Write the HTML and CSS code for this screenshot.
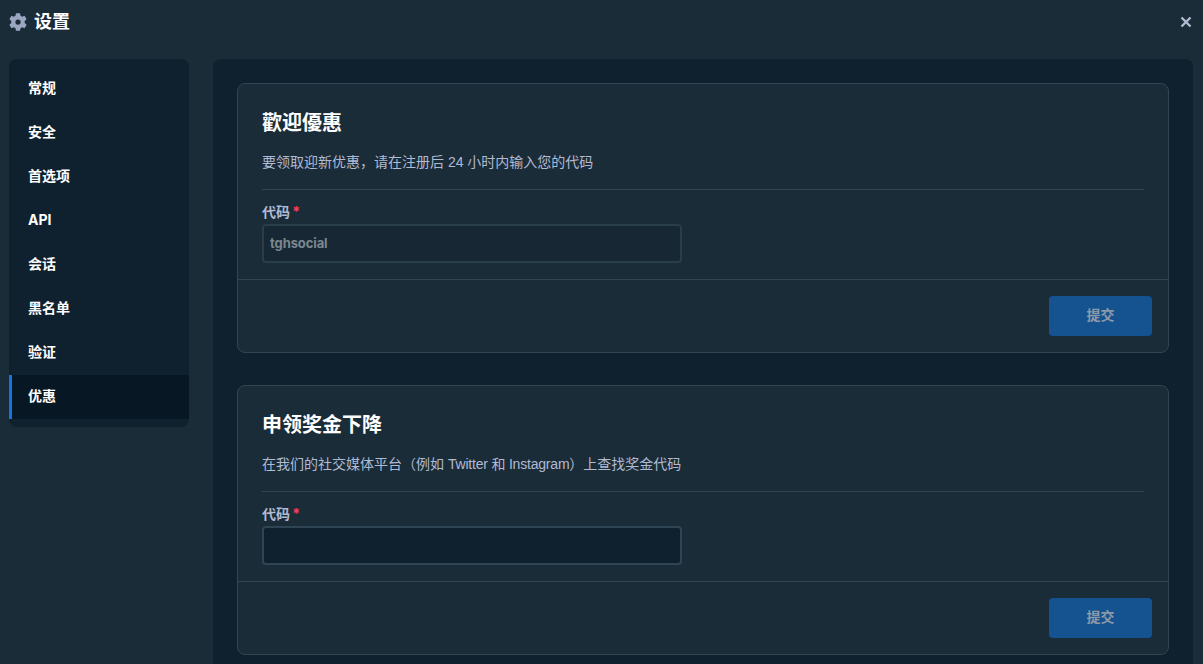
FILE: index.html
```html
<!DOCTYPE html>
<html lang="zh">
<head>
<meta charset="utf-8">
<title>设置</title>
<link rel="stylesheet" href="styles.css">
</head>
<body>
<div class="modal">
  <header class="head">
    <div class="head-title">
      <svg class="gear" viewBox="0 0 24 24"><path fill-rule="evenodd" d="M9.3.3h5.4l.67 3.36 2.17 1.25 3.24-1.09 2.7 4.67-2.57 2.26v2.5l2.57 2.26-2.7 4.67-3.24-1.09-2.17 1.25-.67 3.35H9.3l-.67-3.35-2.17-1.25-3.24 1.09-2.7-4.67 2.57-2.26v-2.5L.52 8.49l2.7-4.67 3.24 1.09 2.17-1.25zM12 8.5a3.5 3.5 0 1 0 0 7 3.5 3.5 0 0 0 0-7z"/></svg>
      <span class="head-text">设置</span>
    </div>
    <svg class="close" viewBox="0 0 12 12"><path d="M1.5 1.5l9 9M10.5 1.5l-9 9"/></svg>
  </header>
  <div class="body">
    <nav class="side">
      <a class="item">常规</a>
      <a class="item">安全</a>
      <a class="item">首选项</a>
      <a class="item">API</a>
      <a class="item">会话</a>
      <a class="item">黑名单</a>
      <a class="item">验证</a>
      <a class="item active">优惠</a>
    </nav>
    <main class="main">
      <section class="card">
        <div class="card-body">
          <h2 class="title">歡迎優惠</h2>
          <p class="desc">要领取迎新优惠，请在注册后 24 小时内输入您的代码</p>
          <hr class="rule">
          <label class="label">代码 <span class="req">*</span></label>
          <div class="input disabled">tghsocial</div>
        </div>
        <div class="card-foot"><button class="btn">提交</button></div>
      </section>
      <section class="card">
        <div class="card-body">
          <h2 class="title">申领奖金下降</h2>
          <p class="desc">在我们的社交媒体平台（例如 <span class="tight">Twitter 和 Instagram</span>）上查找奖金代码</p>
          <hr class="rule">
          <label class="label">代码 <span class="req">*</span></label>
          <div class="input"></div>
        </div>
        <div class="card-foot"><button class="btn">提交</button></div>
      </section>
    </main>
  </div>
</div>
</body>
</html>
```
FILE: styles.css
```css
* { box-sizing: border-box; }
html, body { margin: 0; height: 100%; overflow: hidden; }
body {
  background: #1a2c38;
  color: #fff;
  font-family: Inter, "Noto Sans CJK SC", sans-serif;
}
.modal { height: 100vh; display: flex; flex-direction: column; }
.head {
  height: 59px;
  flex: none;
  padding: 13px 11px 0 9px;
  display: flex;
  justify-content: space-between;
  align-items: flex-start;
}
.head-title {
  display: flex;
  align-items: center;
  gap: 7px;
  height: 18px;
  font-size: 18px;
  font-weight: 700;
}
.head-text { padding-bottom: 5px; }
.gear { width: 18px; height: 18px; fill: #9ca6c1; }
.close { width: 12px; height: 12px; margin-top: 3px; fill: none; stroke: #b1bad3; stroke-width: 2.4; }
.body { flex: 1; display: flex; gap: 24px; padding: 0 10px 0 9px; min-height: 0; align-items: flex-start; }
.side {
  width: 180px;
  flex: none;
  background: #0f212e;
  border-radius: 8px;
  padding: 8px 0;
  display: flex;
  flex-direction: column;
}
.item {
  height: 44px;
  display: flex;
  align-items: center;
  padding: 0 0 4px 19px;
  font-size: 14px;
  font-weight: 700;
  color: #fff;
}
.item.active { background: #071824; border-left: 3px solid #1475e1; padding-left: 16px; }
.main {
  flex: 1;
  align-self: stretch;
  background: #0f212e;
  border-radius: 8px 8px 0 0;
  padding: 24px;
  display: flex;
  flex-direction: column;
  gap: 32px;
  overflow: hidden;
}
.card {
  flex: none;
  background: #1a2c38;
  border: 1px solid #2f4553;
  border-radius: 8px;
}
.card-body { padding: 24px 24px 16px; }
.title { margin: 1px 0 -1px; font-size: 20px; line-height: 28px; font-weight: 700; }
.desc { margin: 16px 0 0; font-family: "Liberation Sans", "Noto Sans CJK SC", sans-serif; font-size: 14px; line-height: 20px; color: #b1bad3; }
.tight { letter-spacing: -.2px; }
.rule { margin: 17px 0 0; border: 0; border-top: 1px solid #2f4553; }
.label { display: block; margin-top: 14px; font-size: 14px; line-height: 16px; font-weight: 700; color: #b1bad3; }
.req { color: #ed4163; margin-left: -1px; }
.input {
  margin-top: 4px;
  width: 420px;
  height: 39px;
  border: 2px solid #2f4553;
  border-radius: 4px;
  background: #0f212e;
  padding: 0 6px;
  font-size: 13px;
  line-height: 35px;
  font-weight: 700;
  letter-spacing: -.1px;
}
.input.disabled { background: #172834; border-color: #2a3d4a; color: #7a8790; }
.card-foot { border-top: 1px solid #2f4553; padding: 16px 16px 16px 0; display: flex; justify-content: flex-end; }
.btn {
  width: 103px;
  height: 40px;
  border: 0;
  border-radius: 4px;
  background: #155290;
  color: #8d9aa8;
  padding: 0 0 4px;
  font: 700 14px Inter, "Noto Sans CJK SC", sans-serif;
}
```
